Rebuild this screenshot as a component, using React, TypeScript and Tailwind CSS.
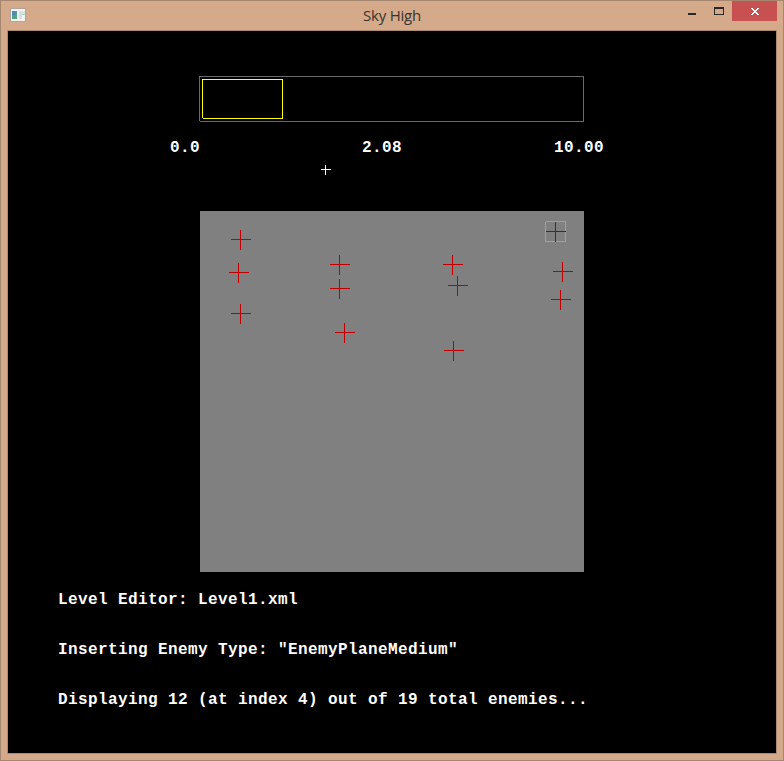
const enemies = [
  [240, 239], [238, 272], [240, 313], [339, 264], [339, 288], [344, 332],
  [452, 264], [457, 285], [453, 350], [562, 271], [560, 299], [555, 231],
];

const mono = "font-['Liberation_Mono','Courier_New',monospace] text-[16px] tracking-[0.4px] leading-5 font-bold text-white whitespace-pre";

function TitleBar() {
  return (
    <header className="flex h-[29px] shrink-0 items-start">
      <div className="w-[110px] shrink-0 pt-[7px] pl-[9px]">
        <svg width="16" height="14" viewBox="0 0 16 14" shapeRendering="crispEdges" className="block">
          <rect width="16" height="14" fill="#b0a49b" />
          <rect x="1" y="1" width="14" height="12" fill="#f1f4f5" />
          <rect x="2" y="3" width="5" height="8" fill="#4f9a91" />
          <rect x="2" y="3" width="3" height="4" fill="#4b8cae" />
          <rect x="3" y="7" width="4" height="4" fill="#57a481" />
          <rect x="9" y="3" width="3" height="8" fill="#dcdcdf" />
          <rect x="12" y="3" width="3" height="4" fill="#d1e9df" />
          <rect x="12" y="6" width="3" height="1" fill="#a5d2bf" />
        </svg>
      </div>
      <h1 className="grow text-center font-['Open_Sans','Noto_Sans',sans-serif] text-[15px] font-normal leading-[29px] tracking-[-0.2px] text-[#3a322d]">Sky High</h1>
      <div className="flex w-[110px] shrink-0 justify-end pr-[6px]">
        <button aria-label="Minimize" className="h-5 w-[27px]">
          <svg width="27" height="20" shapeRendering="crispEdges"><rect x="10" y="12" width="8" height="2" fill="#292929" /></svg>
        </button>
        <button aria-label="Maximize" className="h-5 w-[27px]">
          <svg width="27" height="20" shapeRendering="crispEdges"><path d="M9 6h10v8h-10zM10 8v5h8v-5z" fill="#292929" fillRule="evenodd" /></svg>
        </button>
        <button aria-label="Close" className="h-5 w-[45px] bg-[#c75050]">
          <svg width="45" height="20" shapeRendering="crispEdges">
            <path d="M19 7h2v1h1v1h2v-1h1v-1h2v1h-1v1h-1v1h-1v1h1v1h1v1h1v1h-2v-1h-1v-1h-2v1h-1v1h-2v-1h1v-1h1v-1h1v-1h-1v-1h-1v-1h-1z" fill="#fff" />
          </svg>
        </button>
      </div>
    </header>
  );
}

function Timeline() {
  return (
    <svg width="385" height="46" shapeRendering="crispEdges" className="ml-[191px] block shrink-0">
      <path d="M0 0h385v46h-384v-1h-1zM1 1v44h383v-44z" fill="#696969" fillRule="evenodd" />
      <path d="M3 3h81v40h-80v-1h-1zM4 4v38h79v-38z" fill="#ff0" fillRule="evenodd" />
    </svg>
  );
}

function Field() {
  return (
    <svg width="384" height="361" viewBox="200 211 384 361" shapeRendering="crispEdges" className="ml-48 mt-9 block shrink-0 bg-[#808080]">
      <path d="M546 221h20v21h-21v-20h1zM546 222v19h19v-19z" fill="#1aff1a" fillRule="evenodd" />
      {enemies.map(([x, y], i) => (
        <path key={i} d={`M${x - 9} ${y}h20v1h-20zM${x} ${y - 9}h1v20h-1z`} fill={i === enemies.length - 1 ? "#a60000" : "#c00000"} />
      ))}
    </svg>
  );
}

export default function App() {
  return (
    <div className="flex h-[761px] w-[784px] flex-col overflow-hidden border border-[#a5866e] bg-[#d4aa8b]">
      <TitleBar />
      <main className="mx-[6px] mb-[6px] flex grow flex-col border border-[#ac8a71] bg-black pt-[45px]">
        <Timeline />
        <div className={`${mono} mt-4 ml-[162px] flex`}>
          <span className="w-48">0.0</span>
          <span className="w-48">2.08</span>
          <span>10.00</span>
        </div>
        <svg width="10" height="10" shapeRendering="crispEdges" className="mt-[7px] ml-[313px] block shrink-0">
          <path d="M0 4h10v1h-10zM4 0h1v10h-1z" fill="#fff" />
        </svg>
        <Field />
        <div className={`${mono} mt-[18px] ml-[50px] flex flex-col gap-[30px]`}>
          <p>Level Editor: Level1.xml</p>
          <p>Inserting Enemy Type: "EnemyPlaneMedium"</p>
          <p>Displaying 12 (at index 4) out of 19 total enemies...</p>
        </div>
      </main>
    </div>
  );
}
